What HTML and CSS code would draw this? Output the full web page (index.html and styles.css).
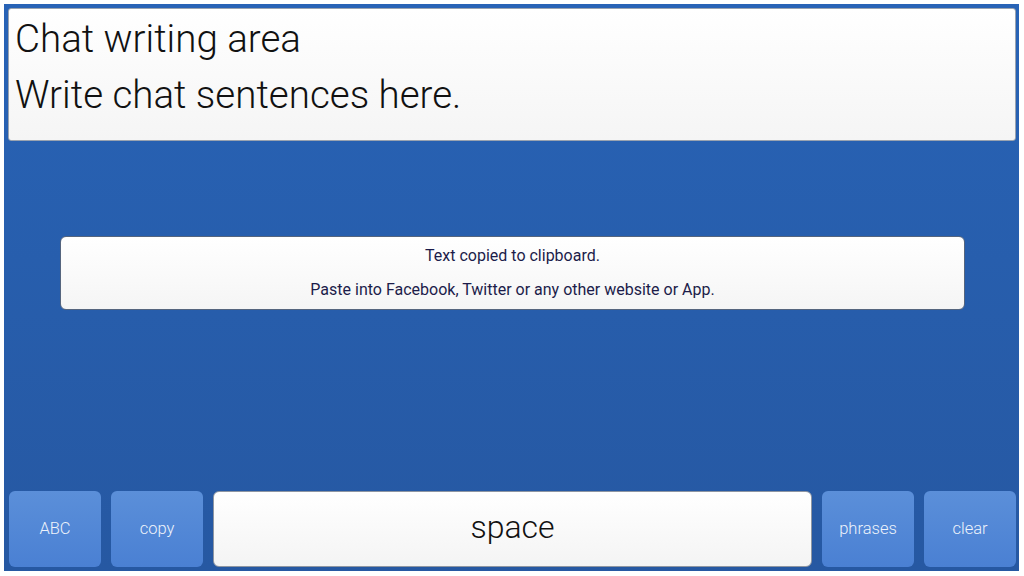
FILE: index.html
```html
<!DOCTYPE html>
<html lang="en">
<head>
    <meta charset="UTF-8">
    <title>Chat writing area</title>
    <link rel="stylesheet" href="styles.css">
</head>
<body>
<div class="app">
    <div class="writing">
        <p>Chat writing area</p>
        <p>Write chat sentences here.</p>
    </div>

    <div class="middle">
        <div class="toast">
            <p>Text copied to clipboard.</p>
            <p>Paste into Facebook, Twitter or any other website or App.</p>
        </div>
    </div>

    <div class="keys">
        <button class="key">ABC</button>
        <button class="key">copy</button>
        <button class="key space">space</button>
        <button class="key">phrases</button>
        <button class="key">clear</button>
    </div>
</div>
</body>
</html>
```

FILE: styles.css
```css
* {
    margin: 0;
    padding: 0;
    box-sizing: border-box;
}
html {
    background: #ffffff;
}
body {
    margin: 4px;
    font-family: Roboto, 'Liberation Sans', sans-serif;
}
.app {
    width: 1015px;
    height: 567px;
    background: linear-gradient(180deg, #2863b6, #2658a2);
    padding: 4px 3px 4px 4px;
    display: flex;
    flex-direction: column;
}
.writing {
    height: 133px;
    background: linear-gradient(180deg, #ffffff, #f5f5f5);
    border: 1px solid #9aa3b0;
    border-radius: 3px;
    padding: 2px 0 0 6px;
    color: #111;
    font-size: 38.5px;
    font-weight: 300;
    line-height: 56px;
}
.middle {
    flex: 1;
    padding: 95px 51px 0 52px;
}
.toast {
    height: 74px;
    background: linear-gradient(180deg, #ffffff, #f5f5f5);
    border: 1px solid #55657e;
    border-radius: 6px;
    color: #1c1c4a;
    font-size: 16px;
    text-align: center;
    padding-top: 9px;
    line-height: 19px;
}
.toast p + p {
    margin-top: 15px;
}
.keys {
    height: 76px;
    display: flex;
    gap: 10px;
    padding: 0 0 0 1px;
}
.key {
    width: 92px;
    border: none;
    border-radius: 6px;
    background: linear-gradient(180deg, #5b8fd9, #4a80d3);
    color: #eef3fb;
    font-family: Roboto, 'Liberation Sans', sans-serif;
    font-size: 16.5px;
    font-weight: 300;
    padding-bottom: 2px;
}
.key.space {
    flex: 1;
    background: linear-gradient(180deg, #ffffff, #f4f4f4);
    border: 1px solid #8e96a2;
    color: #111;
    font-size: 32px;
    font-weight: 300;
    padding-bottom: 4px;
}
```
